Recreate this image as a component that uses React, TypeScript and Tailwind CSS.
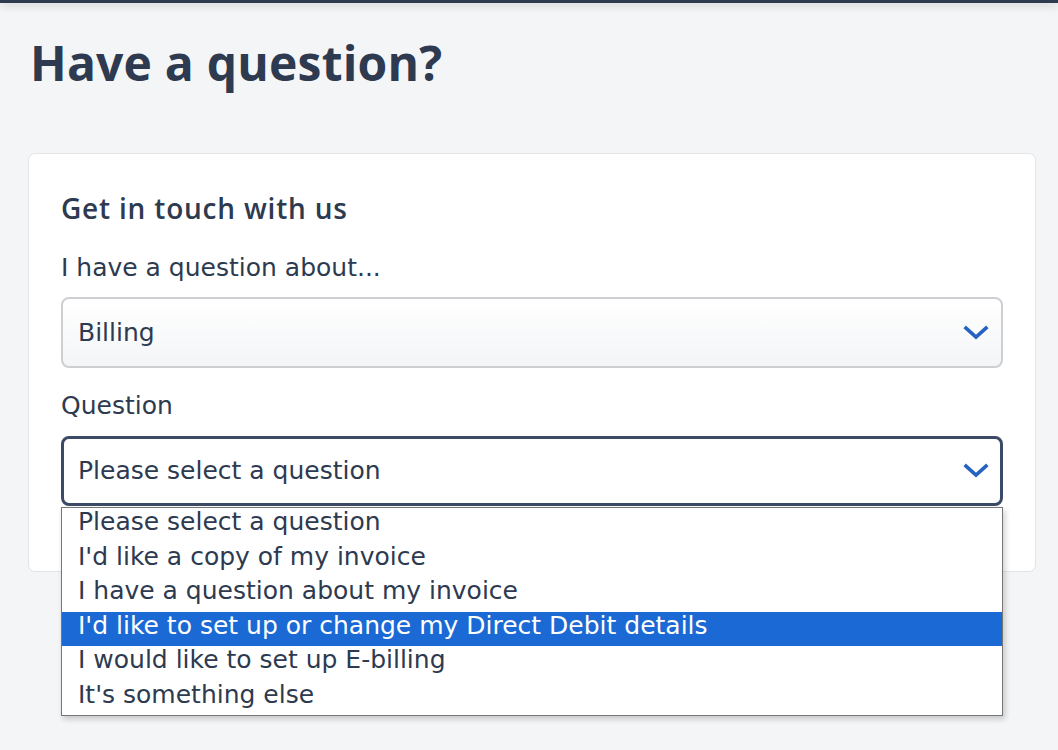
import React from 'react'

const heading = { fontFamily: '"Open Sans", "Liberation Sans", sans-serif' }
const body = { fontFamily: '"DejaVu Sans", "Open Sans", sans-serif' }

const options = [
  'Please select a question',
  "I'd like a copy of my invoice",
  'I have a question about my invoice',
  "I'd like to set up or change my Direct Debit details",
  'I would like to set up E-billing',
  "It's something else",
]

function Chevron() {
  return (
    <svg width="26" height="16" viewBox="0 0 26 16" fill="none">
      <path d="M3 3l10 9 10-9" stroke="#2563c0" strokeWidth={3.6} strokeLinecap="square" />
    </svg>
  )
}

export default function App() {
  return (
    <div className="min-h-[750px] w-full bg-[#f4f5f7] text-[#2d3a4f]" style={body}>
      <div className="h-[3px] bg-[#2d3a4f] shadow-[0_2px_8px_rgba(0,0,0,0.25)]" />

      <h1 className="pl-[30px] pt-[30px] text-[48px] leading-[60px] font-bold tracking-[0.2px]" style={heading}>
        Have a question?
      </h1>

      <div className="relative ml-[28px] mr-[22px] mt-[60px] h-[419px] rounded-[7px] border border-[#e3e4e7] bg-white px-[32px] pt-[34px]">
        <h2 className="text-[28px] leading-[40px] font-semibold tracking-[0.8px]" style={heading}>
          Get in touch with us
        </h2>

        <label className="mt-[25px] block text-[25px] leading-[30px]">I have a question about...</label>
        <div className="mt-[14px] flex h-[71px] items-center justify-between rounded-[8px] border-2 border-[#cdcfd3] bg-gradient-to-b from-white to-[#f4f5f7] pl-[15px] pr-[12px]">
          <span className="text-[25px]">Billing</span>
          <Chevron />
        </div>

        <label className="mt-[23px] block text-[25px] leading-[30px]">Question</label>
        <div className="mt-[15px] flex h-[70px] items-center justify-between rounded-[8px] border-[3px] border-[#3d4a66] bg-white pl-[14px] pr-[11px]">
          <span className="text-[25px]">Please select a question</span>
          <Chevron />
        </div>

        <ul className="absolute left-[32px] top-[353px] z-10 w-[942px] border border-[#767676] bg-white shadow-[2px_3px_6px_rgba(0,0,0,0.2)]">
          {options.map((o, i) => (
            <li
              key={o}
              className={
                'h-[34.5px] pl-[16px] pt-[1px] text-[25px] leading-[26px] ' +
                (i === 3 ? 'bg-[#1a69d4] text-white' : 'text-[#2d3a4f]')
              }
            >
              {o}
            </li>
          ))}
        </ul>
      </div>
    </div>
  )
}
